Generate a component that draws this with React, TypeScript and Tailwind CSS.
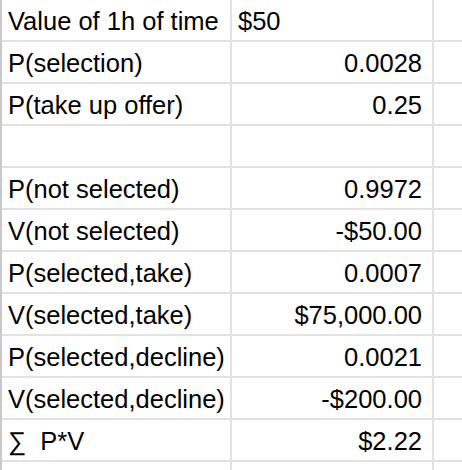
const rows: { label: string; value: string; align: 'left' | 'right' }[] = [
  { label: 'Value of 1h of time', value: '$50', align: 'left' },
  { label: 'P(selection)', value: '0.0028', align: 'right' },
  { label: 'P(take up offer)', value: '0.25', align: 'right' },
  { label: '', value: '', align: 'right' },
  { label: 'P(not selected)', value: '0.9972', align: 'right' },
  { label: 'V(not selected)', value: '-$50.00', align: 'right' },
  { label: 'P(selected,take)', value: '0.0007', align: 'right' },
  { label: 'V(selected,take)', value: '$75,000.00', align: 'right' },
  { label: 'P(selected,decline)', value: '0.0021', align: 'right' },
  { label: 'V(selected,decline)', value: '-$200.00', align: 'right' },
  { label: '\u2211\u00a0\u00a0P*V', value: '$2.22', align: 'right' },
  { label: '', value: '', align: 'right' },
];

export default function App() {
  return (
    <div
      className="w-[462px] h-[470px] overflow-hidden bg-white border-l-2 border-[#c9c9c9] text-[25.5px] text-black"
      style={{ fontFamily: '"Liberation Sans", Arial, sans-serif' }}
    >
      {rows.map((row, i) => (
        <div key={i} className="flex h-[42px] shrink-0 border-b-2 border-[#e2e2e2]">
          {/* label column */}
          <div className="w-[230px] shrink-0 border-r-2 border-[#e2e2e2] flex items-end pl-[6px] pb-[5px] leading-[28px] whitespace-nowrap overflow-hidden">
            {row.label}
          </div>
          {/* value column */}
          <div
            className={
              row.align === 'left'
                ? 'w-[202px] shrink-0 border-r-2 border-[#e2e2e2] flex items-end justify-start pl-[6px] pb-[5px] leading-[28px] whitespace-nowrap'
                : 'w-[202px] shrink-0 border-r-2 border-[#e2e2e2] flex items-end justify-end pr-[10px] pb-[5px] leading-[28px] whitespace-nowrap'
            }
          >
            {row.value}
          </div>
          <div className="flex-1" />
        </div>
      ))}
    </div>
  );
}
